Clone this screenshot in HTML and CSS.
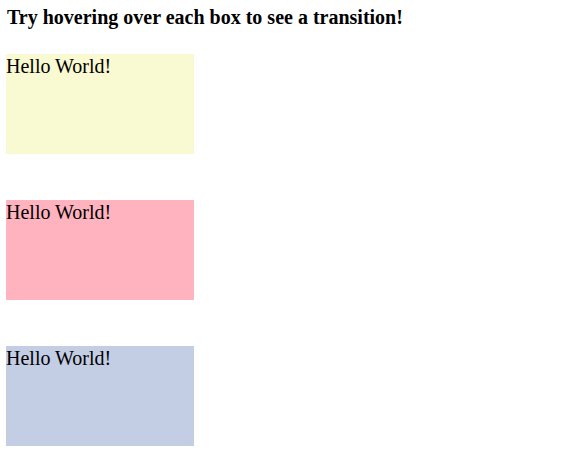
FILE: index.html
```html
<!DOCTYPE html>
<html>
<head>
<meta charset="utf-8">
<link rel="stylesheet" href="styles.css">
</head>
<body>
<h3 class="title">Try hovering over each box to see a transition!</h3>
<div class="boxes">
  <div class="box yellow">Hello World!</div>
  <div class="box pink">Hello World!</div>
  <div class="box blue">Hello World!</div>
</div>
</body>
</html>
```
FILE: styles.css
```css
html, body {
  margin: 0;
  background: #ffffff;
}
body {
  padding: 6px;
  font-family: "Liberation Serif", "Times New Roman", serif;
  color: #000;
}
.title {
  margin: 0;
  font-size: 20px;
  font-weight: bold;
  line-height: 22px;
  padding-left: 1px;
}
.boxes {
  display: flex;
  flex-direction: column;
  gap: 46px;
  margin-top: 26px;
}
.box {
  width: 188px;
  height: 100px;
  font-size: 20px;
  line-height: 24px;
  transition: all 0.5s;
}
.yellow { background: #f9f9d2; }
.pink { background: #ffb3bf; }
.blue { background: #c3cde4; }
.box:hover { opacity: 0.8; }
```
